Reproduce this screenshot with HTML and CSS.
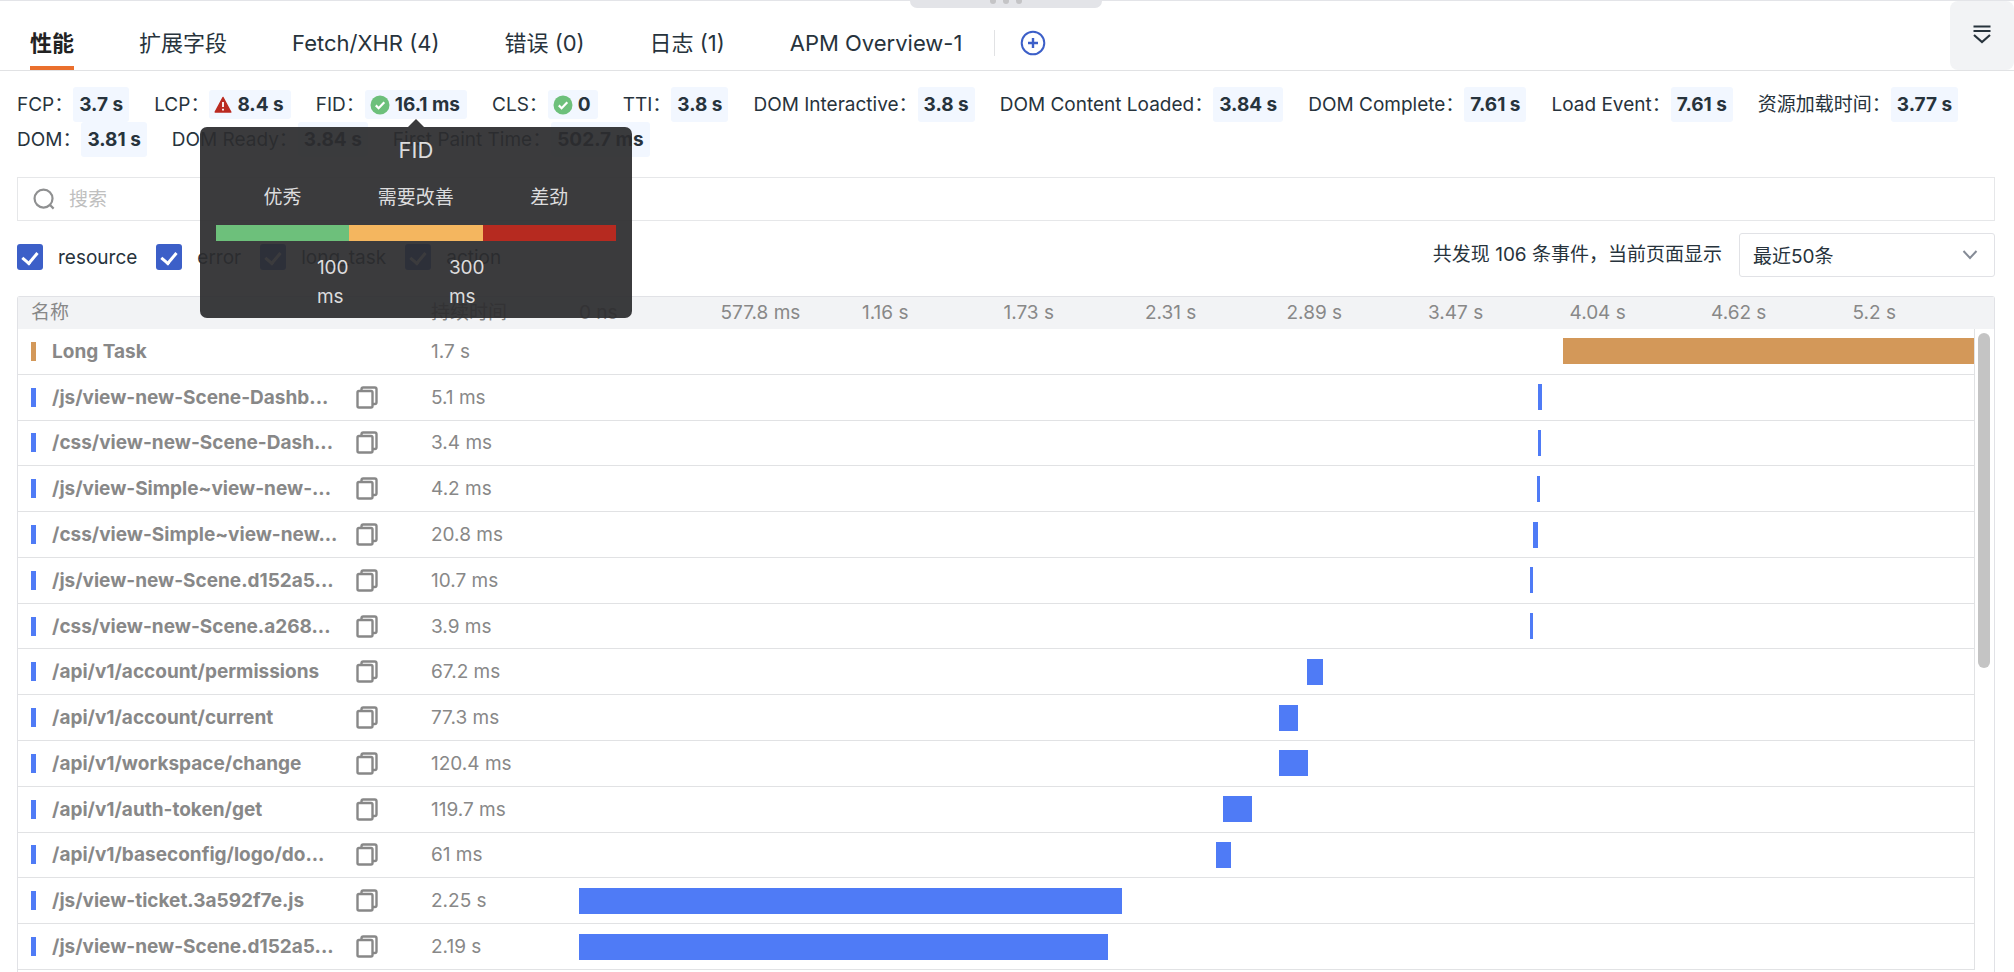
FILE: index.html
```html
<!DOCTYPE html>
<html lang="zh-CN">
<head>
    <meta charset="UTF-8">
    <meta name="viewport" content="width=device-width, initial-scale=1.0">
    <title>性能</title>
    <link rel="stylesheet" href="styles.css">
</head>
<body>
    <svg class="sprite" aria-hidden="true">
        <symbol id="icon-copy" viewBox="0 0 22 23">
            <path d="M5.5 4.5V3.2c0-1 .7-1.7 1.7-1.7h11.6c1 0 1.7.7 1.7 1.7v13.1c0 1-.7 1.7-1.7 1.7H17" />
            <rect x="1.5" y="5" width="15" height="16.5" rx="1.5" />
        </symbol>
        <symbol id="icon-ok" viewBox="0 0 20 20">
            <circle cx="10" cy="10" r="9.5" fill="#6dc07b" />
            <path d="M5.8 10.4l2.8 2.8 5.7-6" fill="none" stroke="#fff" stroke-width="2.2" />
        </symbol>
        <symbol id="icon-warn" viewBox="0 0 18 18">
            <path d="M9 1.5L16.8 16H1.2z" fill="#bb2a20" stroke="#bb2a20" stroke-width="1.5" stroke-linejoin="round" />
            <path d="M9 6v5M9 12.8v1.8" stroke="#fff" stroke-width="1.8" />
        </symbol>
    </svg>

    <header class="top-bar">
        <div class="drag-handle"><i></i><i></i><i></i></div>
        <nav class="tabs">
            <button class="tab active" type="button">性能</button>
            <button class="tab" type="button">扩展字段</button>
            <button class="tab" type="button">Fetch/XHR (4)</button>
            <button class="tab" type="button">错误 (0)</button>
            <button class="tab" type="button">日志 (1)</button>
            <button class="tab" type="button">APM Overview-1</button>
        </nav>
        <button class="add-tab" type="button" aria-label="添加">
            <svg width="26" height="26" viewBox="0 0 26 26" fill="none" stroke="#3c5fc8">
                <circle cx="13" cy="13" r="11.3" stroke-width="2" />
                <path d="M13 8v10M8 13h10" stroke-width="2.4" />
            </svg>
        </button>
        <button class="collapse" type="button" aria-label="收起">
            <svg width="18" height="20" viewBox="0 0 18 20" fill="none" stroke="#27333c" stroke-width="2.2">
                <path d="M.5 2.5h17M.5 7h17M1 11l8 7 8-7" />
            </svg>
        </button>
    </header>

    <main class="content">
        <div class="metrics">
            <div class="metric">FCP：<b>3.7 s</b></div>
            <div class="metric">LCP：<b class="rated"><svg class="warn"><use href="#icon-warn" /></svg>8.4 s</b></div>
            <div class="metric">FID：<b class="rated"><svg><use href="#icon-ok" /></svg>16.1 ms
                <span class="tooltip" role="tooltip">
                    <span class="tooltip-title">FID</span>
                    <span class="levels">
                        <span>优秀</span>
                        <span>需要改善</span>
                        <span>差劲</span>
                    </span>
                    <span class="scale">
                        <i class="good"></i>
                        <i class="fair"></i>
                        <i class="poor"></i>
                    </span>
                    <span class="limits">
                        <span>100 ms</span>
                        <span>300 ms</span>
                    </span>
                </span>
            </b></div>
            <div class="metric">CLS：<b class="rated"><svg><use href="#icon-ok" /></svg>0</b></div>
            <div class="metric">TTI：<b>3.8 s</b></div>
            <div class="metric">DOM Interactive：<b>3.8 s</b></div>
            <div class="metric">DOM Content Loaded：<b>3.84 s</b></div>
            <div class="metric">DOM Complete：<b>7.61 s</b></div>
            <div class="metric">Load Event：<b>7.61 s</b></div>
            <div class="metric">资源加载时间：<b>3.77 s</b></div>
            <div class="metric">DOM：<b>3.81 s</b></div>
            <div class="metric">DOM Ready：<b>3.84 s</b></div>
            <div class="metric">First Paint Time：<b>502.7 ms</b></div>
        </div>

        <label class="search">
            <svg width="22" height="22" viewBox="0 0 24 24" fill="none" stroke="#8f9091" stroke-width="2.4">
                <circle cx="11.5" cy="11.5" r="9.8" />
                <path d="M18 18l4.5 4.5" />
            </svg>
            <input type="text" placeholder="搜索" aria-label="搜索">
        </label>

        <div class="filters">
            <div class="checks">
                <label><input type="checkbox" checked>resource</label>
                <label><input type="checkbox" checked>error</label>
                <label><input type="checkbox" checked>long_task</label>
                <label><input type="checkbox" checked>action</label>
            </div>
            <label class="summary" for="limit">共发现 106 条事件，当前页面显示</label>
            <div class="select-box">
                <select id="limit">
                    <option>最近50条</option>
                </select>
                <svg width="16" height="12" viewBox="0 0 16 12" fill="none" stroke="#858b96" stroke-width="2">
                    <path d="M1.5 2l6.5 7 6.5-7" />
                </svg>
            </div>
        </div>

        <div class="table-box">
            <table class="events">
                <colgroup>
                    <col class="col-name">
                    <col class="col-duration">
                    <col>
                    <col class="col-scroll">
                </colgroup>
                <thead>
                    <tr>
                        <th>名称</th>
                        <th>持续时间</th>
                        <th class="ticks-cell" colspan="2">
                            <div class="ticks">
                                <span>0 ns</span>
                                <span>577.8 ms</span>
                                <span>1.16 s</span>
                                <span>1.73 s</span>
                                <span>2.31 s</span>
                                <span>2.89 s</span>
                                <span>3.47 s</span>
                                <span>4.04 s</span>
                                <span>4.62 s</span>
                                <span>5.2 s</span>
                            </div>
                        </th>
                    </tr>
                </thead>
                <tbody>
                    <tr class="long-task">
                        <td><div class="name"><span>Long Task</span></div></td>
                        <td>1.7 s</td>
                        <td class="line"><div class="bar" style="margin-left: 70.55%; width: 29.45%"></div></td>
                        <td class="scroll" rowspan="14"><div class="thumb"></div></td>
                    </tr>
                    <tr>
                        <td><div class="name"><span>/js/view-new-Scene-Dashb...</span><button class="copy" type="button" aria-label="复制"><svg><use href="#icon-copy" /></svg></button></div></td>
                        <td>5.1 ms</td>
                        <td class="line"><div class="bar" style="margin-left: 68.76%; width: 0.29%"></div></td>
                    </tr>
                    <tr>
                        <td><div class="name"><span>/css/view-new-Scene-Dash...</span><button class="copy" type="button" aria-label="复制"><svg><use href="#icon-copy" /></svg></button></div></td>
                        <td>3.4 ms</td>
                        <td class="line"><div class="bar" style="margin-left: 68.76%; width: 0.22%"></div></td>
                    </tr>
                    <tr>
                        <td><div class="name"><span>/js/view-Simple~view-new-...</span><button class="copy" type="button" aria-label="复制"><svg><use href="#icon-copy" /></svg></button></div></td>
                        <td>4.2 ms</td>
                        <td class="line"><div class="bar" style="margin-left: 68.68%; width: 0.22%"></div></td>
                    </tr>
                    <tr>
                        <td><div class="name"><span>/css/view-Simple~view-new...</span><button class="copy" type="button" aria-label="复制"><svg><use href="#icon-copy" /></svg></button></div></td>
                        <td>20.8 ms</td>
                        <td class="line"><div class="bar" style="margin-left: 68.4%; width: 0.36%"></div></td>
                    </tr>
                    <tr>
                        <td><div class="name"><span>/js/view-new-Scene.d152a5...</span><button class="copy" type="button" aria-label="复制"><svg><use href="#icon-copy" /></svg></button></div></td>
                        <td>10.7 ms</td>
                        <td class="line"><div class="bar" style="margin-left: 68.18%; width: 0.22%"></div></td>
                    </tr>
                    <tr>
                        <td><div class="name"><span>/css/view-new-Scene.a268...</span><button class="copy" type="button" aria-label="复制"><svg><use href="#icon-copy" /></svg></button></div></td>
                        <td>3.9 ms</td>
                        <td class="line"><div class="bar" style="margin-left: 68.18%; width: 0.22%"></div></td>
                    </tr>
                    <tr>
                        <td><div class="name"><span>/api/v1/account/permissions</span><button class="copy" type="button" aria-label="复制"><svg><use href="#icon-copy" /></svg></button></div></td>
                        <td>67.2 ms</td>
                        <td class="line"><div class="bar" style="margin-left: 52.2%; width: 1.15%"></div></td>
                    </tr>
                    <tr>
                        <td><div class="name"><span>/api/v1/account/current</span><button class="copy" type="button" aria-label="复制"><svg><use href="#icon-copy" /></svg></button></div></td>
                        <td>77.3 ms</td>
                        <td class="line"><div class="bar" style="margin-left: 50.19%; width: 1.36%"></div></td>
                    </tr>
                    <tr>
                        <td><div class="name"><span>/api/v1/workspace/change</span><button class="copy" type="button" aria-label="复制"><svg><use href="#icon-copy" /></svg></button></div></td>
                        <td>120.4 ms</td>
                        <td class="line"><div class="bar" style="margin-left: 50.19%; width: 2.08%"></div></td>
                    </tr>
                    <tr>
                        <td><div class="name"><span>/api/v1/auth-token/get</span><button class="copy" type="button" aria-label="复制"><svg><use href="#icon-copy" /></svg></button></div></td>
                        <td>119.7 ms</td>
                        <td class="line"><div class="bar" style="margin-left: 46.17%; width: 2.08%"></div></td>
                    </tr>
                    <tr>
                        <td><div class="name"><span>/api/v1/baseconfig/logo/do...</span><button class="copy" type="button" aria-label="复制"><svg><use href="#icon-copy" /></svg></button></div></td>
                        <td>61 ms</td>
                        <td class="line"><div class="bar" style="margin-left: 45.67%; width: 1.08%"></div></td>
                    </tr>
                    <tr>
                        <td><div class="name"><span>/js/view-ticket.3a592f7e.js</span><button class="copy" type="button" aria-label="复制"><svg><use href="#icon-copy" /></svg></button></div></td>
                        <td>2.25 s</td>
                        <td class="line"><div class="bar" style="margin-left: 0; width: 38.92%"></div></td>
                    </tr>
                    <tr>
                        <td><div class="name"><span>/js/view-new-Scene.d152a5...</span><button class="copy" type="button" aria-label="复制"><svg><use href="#icon-copy" /></svg></button></div></td>
                        <td>2.19 s</td>
                        <td class="line"><div class="bar" style="margin-left: 0; width: 37.92%"></div></td>
                    </tr>
                </tbody>
            </table>
        </div>
    </main>
</body>
</html>
```

FILE: styles.css
```css
* {
    box-sizing: border-box;
}
body {
    margin: 0;
    height: 100vh;
    display: flex;
    flex-direction: column;
    overflow: hidden;
    font-family: Inter, "Noto Sans CJK SC", sans-serif;
    font-size: 19px;
    color: #27333c;
    background-color: #fff;
}
button, input, select {
    font: inherit;
    color: inherit;
}
button {
    border: none;
    background: none;
    padding: 0;
    cursor: pointer;
}
svg {
    display: block;
}
.sprite {
    position: absolute;
    width: 0;
    height: 0;
}

/* top bar */
.top-bar {
    position: relative;
    display: flex;
    align-items: center;
    height: 71px;
    border-top: 1px solid #e3e4e8;
    border-bottom: 1px solid #e1e2e4;
}
.drag-handle {
    position: absolute;
    top: -1px;
    left: 50%;
    width: 192px;
    height: 8px;
    margin-left: -97px;
    display: flex;
    justify-content: center;
    gap: 7px;
    background-color: #e3e4e8;
    border-radius: 0 0 7px 7px;
    overflow: hidden;
}
.drag-handle i {
    width: 6px;
    height: 6px;
    margin-top: -2px;
    border-radius: 50%;
    background-color: #c4c4c6;
}
.tabs {
    display: flex;
    align-self: stretch;
    gap: 65px;
    padding-left: 30px;
}
.tab {
    font-size: 22px;
    line-height: 32px;
    white-space: nowrap;
    padding-top: 19px;
    border-bottom: 4px solid transparent;
}
.tab.active {
    font-weight: bold;
    color: #222;
    border-bottom-color: #ea6f2d;
}
.add-tab {
    margin: 14px 0 0 32px;
    padding-left: 25px;
    border-left: 1px solid #e1e2e4;
}
.collapse {
    align-self: stretch;
    width: 64px;
    margin-left: auto;
    padding-bottom: 4px;
    background-color: #f2f3f5;
    border-radius: 8px;
}
.collapse svg {
    margin: 0 auto;
}

.content {
    flex: 1;
    min-height: 0;
    display: flex;
    flex-direction: column;
    padding: 16px 19px 0 17px;
}

/* metrics */
.metrics {
    display: flex;
    flex-wrap: wrap;
    column-gap: 25px;
}
.metric {
    display: flex;
    align-items: center;
    height: 35px;
    line-height: 35px;
    white-space: nowrap;
}
.metric b {
    font-weight: bold;
    padding: 0 6px;
    background-color: #f2f7ff;
    border-radius: 3px;
}
.metric .rated {
    position: relative;
    display: flex;
    align-items: center;
    gap: 5px;
    line-height: 29px;
    padding: 0 7px 0 5px;
}
.rated svg {
    width: 20px;
    height: 20px;
}
.rated .warn {
    width: 18px;
    height: 18px;
}

/* tooltip */
.tooltip {
    position: absolute;
    z-index: 10;
    top: 100%;
    left: 50%;
    width: 432px;
    margin: 8px 0 0 -216px;
    padding: 9px 16px 7px;
    font-weight: normal;
    line-height: 29px;
    color: #dcdcdd;
    background-color: rgba(44, 44, 46, 0.93);
    border-radius: 7px;
}
.tooltip::before {
    content: "";
    position: absolute;
    bottom: 100%;
    left: 50%;
    margin-left: -8px;
    border: 8px solid transparent;
    border-top: none;
    border-bottom-color: #3b3b3c;
}
.tooltip-title {
    display: block;
    font-size: 22px;
    text-align: center;
}
.levels, .scale {
    display: grid;
    grid-template-columns: repeat(3, 1fr);
    text-align: center;
}
.levels {
    margin: 18px 0 13px;
}
.scale i {
    height: 16px;
}
.good {
    background-color: #6dc07b;
}
.fair {
    background-color: #f4b65f;
}
.poor {
    background-color: #b62a20;
}
.limits {
    display: flex;
    gap: 92px;
    padding: 12px 0 0 101px;
}
.limits span {
    width: 40px;
    white-space: normal;
}

/* search */
.search {
    display: flex;
    align-items: center;
    gap: 14px;
    height: 44px;
    margin-top: 20px;
    padding-left: 15px;
    border: 1px solid #e6e7e9;
}
.search input {
    flex: 1;
    border: none;
    outline: none;
    padding: 0;
    background: none;
}
.search input::placeholder {
    color: #bfbfbf;
}

/* filters */
.filters {
    display: flex;
    align-items: center;
    margin: 12px 0 19px;
}
.checks {
    display: flex;
    gap: 19px;
    margin-right: auto;
    padding-top: 4px;
}
.checks label {
    display: flex;
    align-items: center;
    gap: 15px;
}
.checks input {
    appearance: none;
    display: flex;
    justify-content: center;
    width: 26px;
    height: 26px;
    margin: 0;
    background-color: #3c5fc8;
    border-radius: 3px;
}
.checks input::before {
    content: "";
    width: 7px;
    height: 12px;
    margin-top: 5px;
    border: solid #fff;
    border-width: 0 3px 3px 0;
    transform: rotate(40deg);
}
.summary {
    line-height: 28px;
    margin-right: 17px;
}
.select-box {
    position: relative;
    width: 256px;
}
.select-box select {
    appearance: none;
    display: block;
    width: 100%;
    height: 44px;
    padding: 2px 13px 0;
    background-color: #fff;
    border: 1px solid #e1e2e6;
    border-radius: 3px;
}
.select-box svg {
    position: absolute;
    top: 16px;
    right: 17px;
    pointer-events: none;
}

/* events table */
.table-box {
    flex: 1;
    min-height: 0;
    padding-bottom: 2px;
    border: 1px solid #e1e2e6;
    border-bottom: none;
    border-radius: 3px 3px 0 0;
}
.events {
    width: 100%;
    height: 100%;
    table-layout: fixed;
    border-collapse: separate;
    border-spacing: 0;
    color: #888;
}
.col-name {
    width: 400px;
}
.col-duration {
    width: 161px;
}
.col-scroll {
    width: 20px;
}
.events th {
    height: 32px;
    padding: 0 13px;
    font-weight: normal;
    line-height: 28px;
    text-align: left;
    background-color: #f2f3f5;
}
.events .ticks-cell {
    padding: 0;
}
.ticks {
    display: grid;
    grid-template-columns: repeat(10, 1fr);
}
.events td {
    padding: 0 13px;
    border-bottom: 1px solid #e1e2e4;
}
.name {
    display: flex;
    align-items: center;
    font-weight: bold;
}
.name::before {
    content: "";
    width: 5px;
    height: 19px;
    margin-right: 16px;
    background-color: #4f7bf6;
}
.name span {
    width: 304px;
    white-space: nowrap;
}
.copy svg {
    width: 22px;
    height: 23px;
    fill: none;
    stroke: #888;
    stroke-width: 2.4;
}
.events .line {
    padding: 0;
}
.bar {
    height: 26px;
    background-color: #4f7bf6;
}
.long-task .name::before, .long-task .bar {
    background-color: #d39859;
}
.events .scroll {
    padding: 4px 3px 0;
    vertical-align: top;
    border-left: 1px solid #e1e2e4;
    border-bottom: none;
}
.thumb {
    width: 12px;
    height: 335px;
    border-radius: 6px;
    background-color: #c4c4c4;
}
```
